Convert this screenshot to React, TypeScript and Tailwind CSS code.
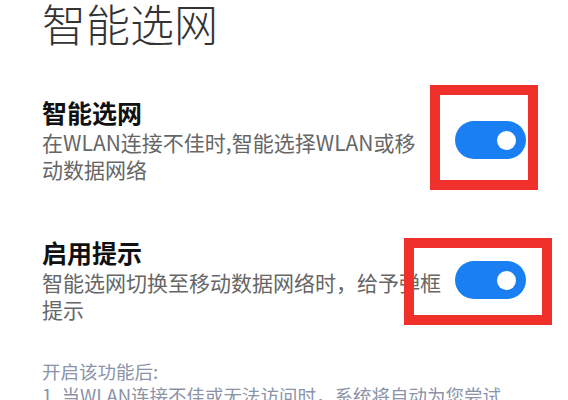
const cjk = { fontFamily: '"Noto Sans CJK SC", "Noto Sans", sans-serif' }

function Toggle() {
  return (
    <div className="flex h-[38px] w-[71px] shrink-0 items-center justify-end rounded-full bg-[#1a7ff3] pr-[10px]">
      <span className="size-[19px] rounded-full bg-white" />
    </div>
  )
}

function SettingRow({ title, lines }: { title: string; lines: string[] }) {
  return (
    <div className="flex items-center gap-[13px]">
      <div className="min-w-0 flex-1">
        <p className="text-[25px] font-bold leading-[30px] text-[#111]">{title}</p>
        <div className="mt-[2px] text-[21px] leading-[27px] text-[#666]">
          {lines.map((l) => (
            <p key={l} className="whitespace-nowrap">{l}</p>
          ))}
        </div>
      </div>
      <Toggle />
    </div>
  )
}

export default function App() {
  return (
    <div className="relative h-[400px] w-[568px] overflow-hidden bg-white" style={cjk}>
      <div className="flex flex-col px-[42px]">
        <h1 className="text-[44px] font-light leading-[46px] text-[#333]">智能选网</h1>
        <div className="mt-[51px]">
          <SettingRow title="智能选网" lines={['在WLAN连接不佳时,智能选择WLAN或移', '动数据网络']} />
        </div>
        <div className="mt-[54px]">
          <SettingRow title="启用提示" lines={['智能选网切换至移动数据网络时，给予弹框', '提示']} />
        </div>
        <div className="mt-[36px] text-[18.5px] leading-[24px] text-[#8a93a8]">
          <p>开启该功能后:</p>
          <p className="whitespace-nowrap">1. 当WLAN连接不佳或无法访问时，系统将自动为您尝试</p>
        </div>
      </div>

      {/* red annotation frames */}
      <div className="absolute left-[430px] top-[85px] h-[105px] w-[108px] border-[10px] border-[#f0302a]" />
      <div className="absolute left-[404px] top-[238px] h-[87px] w-[148px] border-[10px] border-[#f0302a]" />
    </div>
  )
}
